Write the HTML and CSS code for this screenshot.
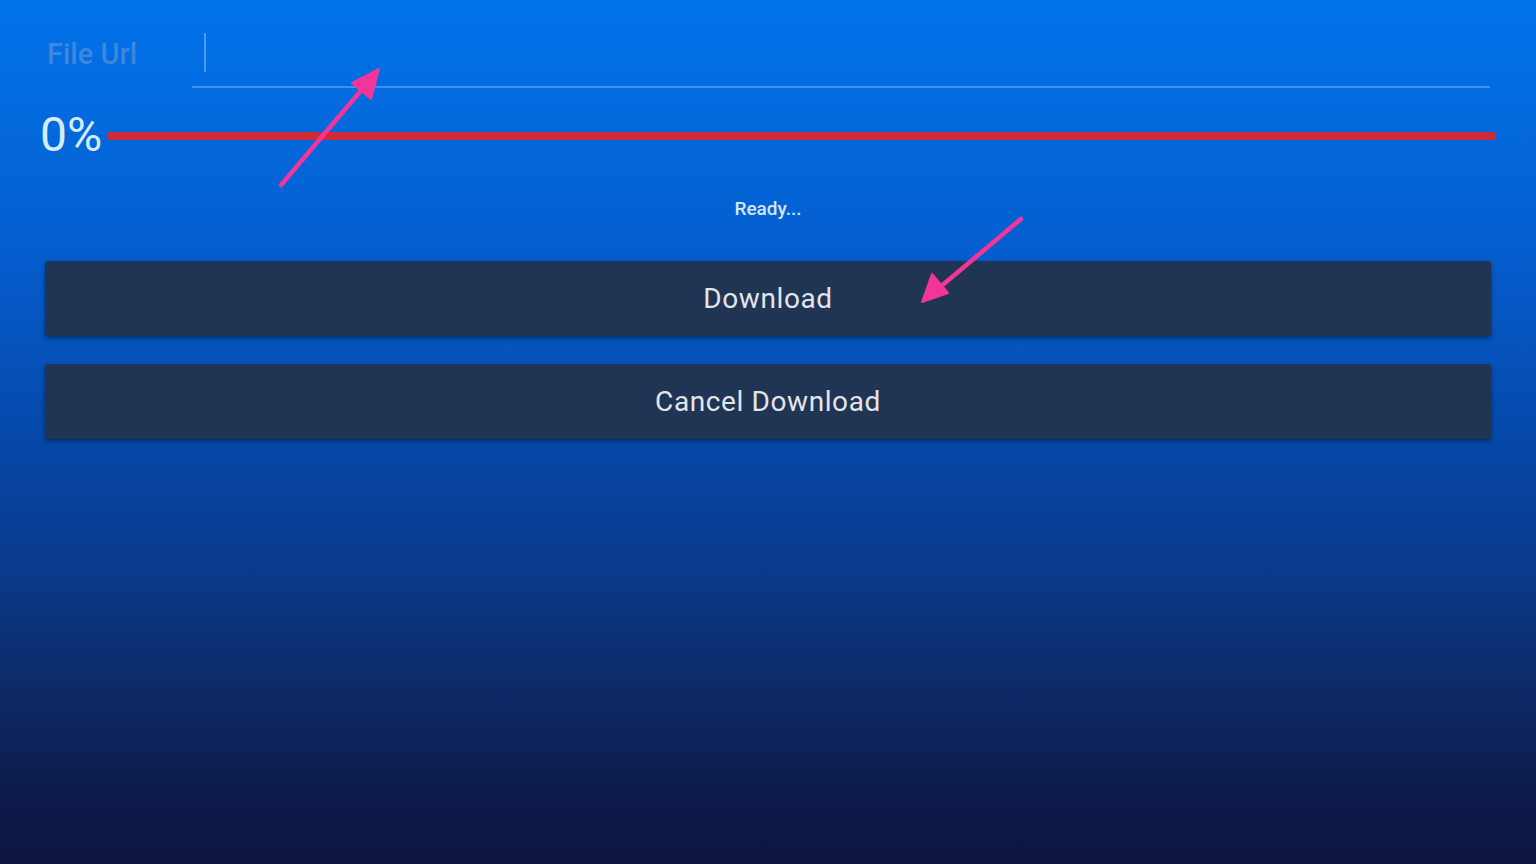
FILE: index.html
```html
<!DOCTYPE html>
<html lang="en">
<head>
<meta charset="utf-8">
<title>Downloader</title>
<link rel="stylesheet" href="styles.css">
</head>
<body>
<main class="app">
  <div class="url-row">
    <span class="url-label">File Url</span>
    <div class="url-field"><span class="cursor"></span></div>
  </div>
  <div class="progress-row">
    <span class="percent">0%</span>
    <div class="bar"></div>
  </div>
  <div class="status">Ready...</div>
  <div class="buttons">
    <button class="btn">Download</button>
    <button class="btn">Cancel Download</button>
  </div>
</main>
<svg class="annotations" width="1536" height="864" viewBox="0 0 1536 864">
  <g stroke="#f2359b" stroke-width="4.5" stroke-linecap="round" fill="#f2359b">
    <line x1="281" y1="185" x2="364" y2="87"/>
    <polygon points="379,69 352,83 371,99" stroke-width="2" stroke-linejoin="round"/>
    <line x1="1021" y1="219" x2="939" y2="288"/>
    <polygon points="922,302 932,274 948,293" stroke-width="2" stroke-linejoin="round"/>
  </g>
</svg>
</body>
</html>
```

FILE: styles.css
```css
* { box-sizing: border-box; }

html, body {
  margin: 0;
  height: 864px;
  overflow: hidden;
}

body {
  position: relative;
  font-family: Roboto, "Noto Sans", "Liberation Sans", sans-serif;
  background: linear-gradient(180deg,
    #0073ea 0%,
    #055fd0 28%,
    #0549ab 50%,
    #0a3a8a 66%,
    #0c2a66 80%,
    #0d1d4f 90%,
    #0d1540 100%);
}

.app {
  display: flex;
  flex-direction: column;
}

.url-row {
  display: flex;
  align-items: stretch;
  height: 88px;
  padding-left: 47px;
  padding-right: 46px;
}

.url-label {
  width: 145px;
  padding-top: 34px;
  font-size: 29px;
  font-weight: 500;
  line-height: 40px;
  color: #3f86dc;
}

.url-field {
  flex: 1;
  padding-top: 33px;
  padding-left: 12px;
  border-bottom: 2px solid #3a92ef;
}

.cursor {
  display: block;
  width: 2px;
  height: 39px;
  background: #4e9cf0;
}

.progress-row {
  display: flex;
  align-items: center;
  gap: 5px;
  height: 94px;
  padding-left: 40px;
  padding-right: 40px;
}

.percent {
  font-size: 48px;
  line-height: 56px;
  color: #d6ecfa;
}

.bar {
  flex: 1;
  height: 8px;
  margin-top: 1px;
  border-radius: 3px;
  background: #d02a36;
}

.status {
  height: 54px;
  line-height: 54px;
  text-align: center;
  font-size: 19px;
  font-weight: 500;
  color: #d3e6fa;
}

.buttons {
  display: flex;
  flex-direction: column;
  gap: 28px;
  padding: 25px 45px 0 45px;
}

.btn {
  height: 75px;
  border: none;
  border-radius: 3px;
  background: #203453;
  box-shadow: 0 2px 4px rgba(4, 14, 40, 0.55);
  color: #e2e5ea;
  font-family: Roboto, "Noto Sans", "Liberation Sans", sans-serif;
  font-size: 28px;
  letter-spacing: 0.6px;
}

.annotations {
  position: absolute;
  left: 0;
  top: 0;
  pointer-events: none;
}
```
